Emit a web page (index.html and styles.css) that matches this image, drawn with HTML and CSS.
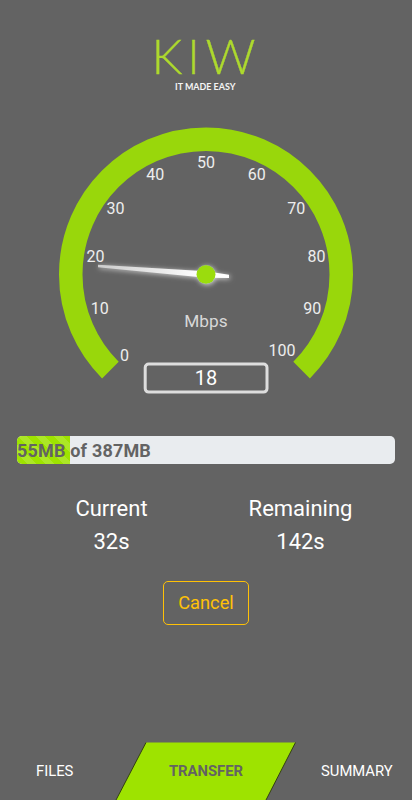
FILE: index.html
```html
<!DOCTYPE html>
<html lang="en">
<head>
    <meta charset="utf-8">
    <meta name="viewport" content="initial-scale=1, width=device-width">
    <title>KIW Transfer</title>
    <link rel="stylesheet" href="styles.css">
</head>
<body>
    <div class="logo">
        <svg width="120" height="80" viewBox="0 0 120 80">
            <text class="logo-text" x="5.5" y="59" textLength="31" lengthAdjust="spacingAndGlyphs">K</text>
            <text class="logo-text" x="41.2" y="59">I</text>
            <text class="logo-text" x="59.5" y="59" textLength="50" lengthAdjust="spacingAndGlyphs">W</text>
            <text class="tagline" x="29" y="74.5" textLength="60.5" lengthAdjust="spacingAndGlyphs">IT MADE EASY</text>
        </svg>
    </div>

    <svg class="gauge" width="412" height="280" viewBox="0 120 412 280">
        <defs>
            <filter id="glow" filterUnits="userSpaceOnUse" x="80" y="250" width="170" height="50">
                <feDropShadow dx="1" dy="1" stdDeviation="2.5" flood-color="#fff" flood-opacity="0.7"/>
            </filter>
            <linearGradient id="needle">
                <stop offset="0" stop-color="#ccc"/>
                <stop offset="0.8" stop-color="#fff"/>
            </linearGradient>
        </defs>
        <path class="arc" d="M110.4 370.1 A135.25 135.25 0 1 1 301.6 370.1"/>
        <g class="ticks">
            <text x="124.5" y="361">0</text>
            <text x="99.7" y="314">10</text>
            <text x="95.5" y="262">20</text>
            <text x="115.5" y="213.5">30</text>
            <text x="155.3" y="180">40</text>
            <text x="206" y="168">50</text>
            <text x="256.7" y="180">60</text>
            <text x="296.3" y="213.5">70</text>
            <text x="316.4" y="262">80</text>
            <text x="312.2" y="314">90</text>
            <text x="282" y="355.5">100</text>
        </g>
        <g filter="url(#glow)">
            <path d="M98 264.8 L206 271.3 L229 274.8 L229 278 L206 277.8 L98 267.2 Z" fill="url(#needle)"/>
            <circle cx="206" cy="274.5" r="9.5" fill="#9bdc0c"/>
        </g>
        <text class="unit" x="206" y="327.3">Mbps</text>
        <rect class="value-box" x="145.2" y="364.1" width="121.8" height="28" rx="3.5"/>
        <text class="value" x="206" y="384.5">18</text>
    </svg>

    <div class="progress">
        <div class="progress-bar"><span>55MB of 387MB</span></div>
    </div>

    <div class="times">
        <div>Current<br>32s</div>
        <div>Remaining<br>142s</div>
    </div>

    <button type="button" class="cancel-button">Cancel</button>

    <div class="tabs">
        <div class="tab files">FILES</div>
        <div class="tab active">
            <svg class="tab-shape" width="182" height="58" viewBox="0 0 182 58">
                <path d="M31 0.5 L180.5 0.5 L151 58 L1 58 Z" fill="#9ee300"/>
                <path d="M31 0.5 L1 58 M180.5 0.5 L151 58" stroke="#344012" stroke-width="1"/>
            </svg>
            <span>TRANSFER</span>
        </div>
        <div class="tab summary">SUMMARY</div>
    </div>
</body>
</html>
```

FILE: styles.css
```css
* {
    box-sizing: border-box;
}
body {
    margin: 0;
    height: 800px;
    display: flex;
    flex-direction: column;
    align-items: center;
    overflow: hidden;
    font-family: Roboto, sans-serif;
    background-color: #636363;
    color: #fff;
}
.logo {
    height: 120px;
    padding-top: 15px;
}
.logo svg {
    display: block;
}
.logo-text {
    font-family: Lato, sans-serif;
    font-weight: 300;
    font-size: 47.5px;
    fill: #add92e;
    stroke: #add92e;
    stroke-width: 0.3;
}
.tagline {
    font-family: Lato, sans-serif;
    font-size: 9.3px;
    font-weight: 700;
    fill: #f4f4f4;
}
.gauge {
    display: block;
    flex: none;
}
.arc {
    fill: none;
    stroke: #99d70b;
    stroke-width: 23.5;
}
.gauge text {
    text-anchor: middle;
}
.ticks {
    font-size: 16px;
    fill: #eee;
}
.unit {
    font-size: 17.3px;
    fill: #d8d8d8;
}
.value-box {
    fill: none;
    stroke: #ddd;
    stroke-width: 3;
}
.value {
    font-size: 20px;
    fill: #fff;
}
.progress {
    width: 378px;
    height: 28px;
    margin-top: 36px;
    border-radius: 5px;
    overflow: hidden;
    background-color: #e9ecef;
}
.progress-bar {
    width: 14%;
    height: 28px;
    background-color: #9ee300;
    background-image: linear-gradient(45deg, rgba(255, 255, 255, .15) 25%, transparent 25%, transparent 50%, rgba(255, 255, 255, .15) 50%, rgba(255, 255, 255, .15) 75%, transparent 75%);
    background-size: 18px 18px;
    line-height: 29px;
    font-size: 18px;
    font-weight: 700;
    letter-spacing: 0.18px;
    color: #636363;
    white-space: nowrap;
}
.times {
    width: 378px;
    margin-top: 28px;
    display: grid;
    grid-template-columns: 1fr 1fr;
    text-align: center;
    font-size: 22px;
    line-height: 33px;
}
.cancel-button {
    width: 86px;
    height: 44px;
    margin-top: 23px;
    border: 1px solid #ffc107;
    border-radius: 5px;
    background: none;
    padding: 0 0 1px;
    font-family: inherit;
    font-size: 18.3px;
    color: #ffc107;
}
.tabs {
    width: 412px;
    height: 58px;
    margin-top: auto;
    display: grid;
    grid-template-columns: 115px 182px 115px;
    font-size: 14.8px;
    line-height: 58px;
}
.files {
    padding-left: 36px;
}
.active {
    position: relative;
    text-align: center;
    font-weight: 700;
    color: #636363;
}
.tab-shape {
    position: absolute;
    top: 0;
    left: 0;
}
.active span {
    position: relative;
}
.summary {
    padding-left: 24px;
}
```
